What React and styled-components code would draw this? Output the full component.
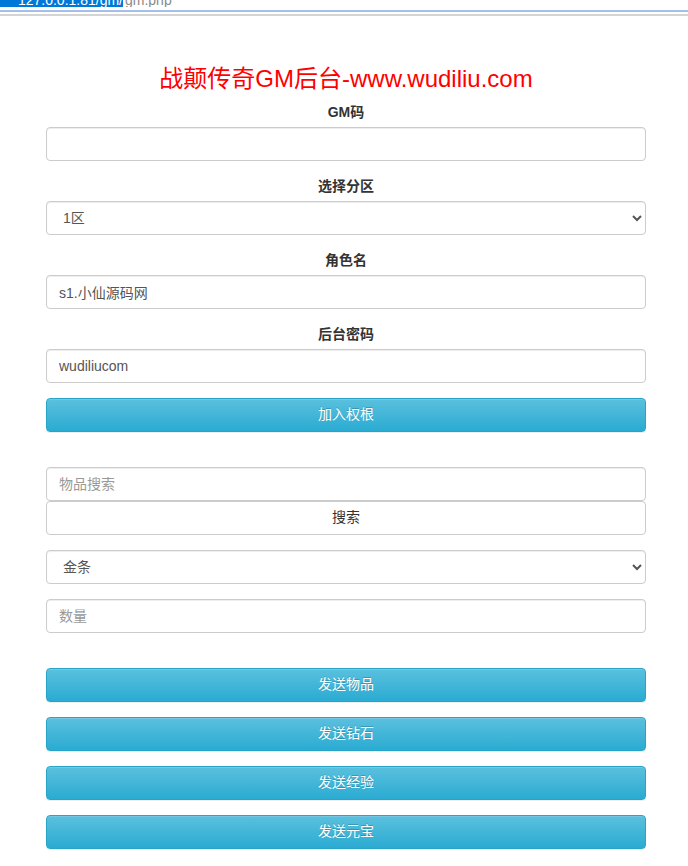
import React from "react";
import styled, { createGlobalStyle } from "styled-components";

const Global = createGlobalStyle`
  html, body { margin: 0; padding: 0; background: #fff; }
  body {
    font-family: "Liberation Sans", Arial, "Noto Sans CJK SC", sans-serif;
    font-size: 14px;
    line-height: 1.42857;
    color: #333;
  }
  * { box-sizing: border-box; }
`;

const Chrome = styled.div`
  display: flex;
  flex-direction: column;
`;

const UrlStrip = styled.div`
  height: 10px;
  display: flex;
  align-items: flex-start;
  overflow: hidden;
`;

const Selected = styled.span`
  display: block;
  flex: 0 0 123px;
  height: 7px;
  background: #0078d7;
  color: #fff;
  font-size: 14px;
  line-height: 14px;
  overflow: hidden;
  white-space: nowrap;
  text-align: right;
  & > span { display: block; margin-top: -7px; }
`;

const UrlRest = styled.span`
  display: block;
  height: 7px;
  overflow: hidden;
  color: #8a8a8a;
  font-size: 14px;
  line-height: 14px;
  padding-left: 2px;
  & > span { display: block; margin-top: -7px; }
`;

const Line = styled.div`
  height: 2px;
  background: ${(p) => p.color};
  margin-top: ${(p) => p.gap || 0}px;
`;

const Page = styled.main`
  width: 600px;
  margin-left: 46px;
  padding-top: 30px;
  padding-bottom: 20px;
`;

const Title = styled.h3`
  margin: 20px 0 10px;
  font-size: 24px;
  font-weight: 400;
  line-height: 1.1;
  color: #ff0000;
  text-align: center;
`;

const Group = styled.div`
  margin-bottom: ${(p) => (p.$gap != null ? p.$gap : 15)}px;
`;

const Label = styled.label`
  display: block;
  text-align: center;
  font-weight: 700;
  font-size: 14px;
  line-height: 20px;
  margin-bottom: 5px;
  color: #333;
`;

const Input = styled.input`
  display: block;
  width: 100%;
  height: 34px;
  padding: 6px 12px;
  font-family: inherit;
  font-size: 14px;
  line-height: 1.42857;
  color: #555;
  background: #fff;
  border: 1px solid #ccc;
  border-radius: 4px;
  box-shadow: inset 0 1px 1px rgba(0, 0, 0, 0.075);
  outline: none;
  &::placeholder { color: #999; }
`;

const Select = styled.select`
  display: block;
  width: 100%;
  height: 34px;
  padding: 6px 8px 6px 12px;
  font-family: inherit;
  font-size: 14px;
  color: #555;
  background: #fff;
  border: 1px solid #ccc;
  border-radius: 4px;
  box-shadow: inset 0 1px 1px rgba(0, 0, 0, 0.075);
  outline: none;
`;

const InfoButton = styled.button`
  display: block;
  width: 100%;
  height: 34px;
  padding: 6px 12px;
  font-family: inherit;
  font-size: 14px;
  line-height: 1.42857;
  color: #fff;
  text-shadow: 0 -1px 0 rgba(0, 0, 0, 0.2);
  background: linear-gradient(to bottom, #5bc0de 0, #2aabd2 100%);
  border: 1px solid #28a4c9;
  border-radius: 4px;
  box-shadow: inset 0 1px 0 rgba(255, 255, 255, 0.15), 0 1px 1px rgba(0, 0, 0, 0.075);
  cursor: pointer;
  margin-bottom: ${(p) => (p.$gap != null ? p.$gap : 15)}px;
`;

const PlainButton = styled.button`
  display: block;
  width: 100%;
  height: 34px;
  padding: 6px 12px;
  font-family: inherit;
  font-size: 14px;
  line-height: 1.42857;
  color: #333;
  background: #fff;
  border: 1px solid #ccc;
  border-radius: 4px;
  cursor: pointer;
`;

export default function App() {
  return (
    <>
      <Global />
      <Chrome>
        <UrlStrip>
          <Selected><span>127.0.0.1:81/gm/</span></Selected>
          <UrlRest><span>gm.php</span></UrlRest>
        </UrlStrip>
        <Line color="#a4bfeb" />
        <Line color="#d4d4d4" gap={2} />
      </Chrome>
      <Page>
        <Title>战颠传奇GM后台-www.wudiliu.com</Title>
        <Group>
          <Label>GM码</Label>
          <Input type="text" />
        </Group>
        <Group>
          <Label>选择分区</Label>
          <Select defaultValue="1">
            <option value="1">1区</option>
          </Select>
        </Group>
        <Group>
          <Label>角色名</Label>
          <Input type="text" defaultValue="s1.小仙源码网" />
        </Group>
        <Group>
          <Label>后台密码</Label>
          <Input type="text" defaultValue="wudiliucom" />
        </Group>
        <InfoButton $gap={35}>加入权根</InfoButton>
        <Group>
          <Input type="text" placeholder="物品搜索" />
          <PlainButton>搜索</PlainButton>
        </Group>
        <Group>
          <Select defaultValue="jt">
            <option value="jt">金条</option>
          </Select>
        </Group>
        <Group $gap={35}>
          <Input type="text" placeholder="数量" />
        </Group>
        <InfoButton>发送物品</InfoButton>
        <InfoButton>发送钻石</InfoButton>
        <InfoButton>发送经验</InfoButton>
        <InfoButton>发送元宝</InfoButton>
      </Page>
    </>
  );
}
